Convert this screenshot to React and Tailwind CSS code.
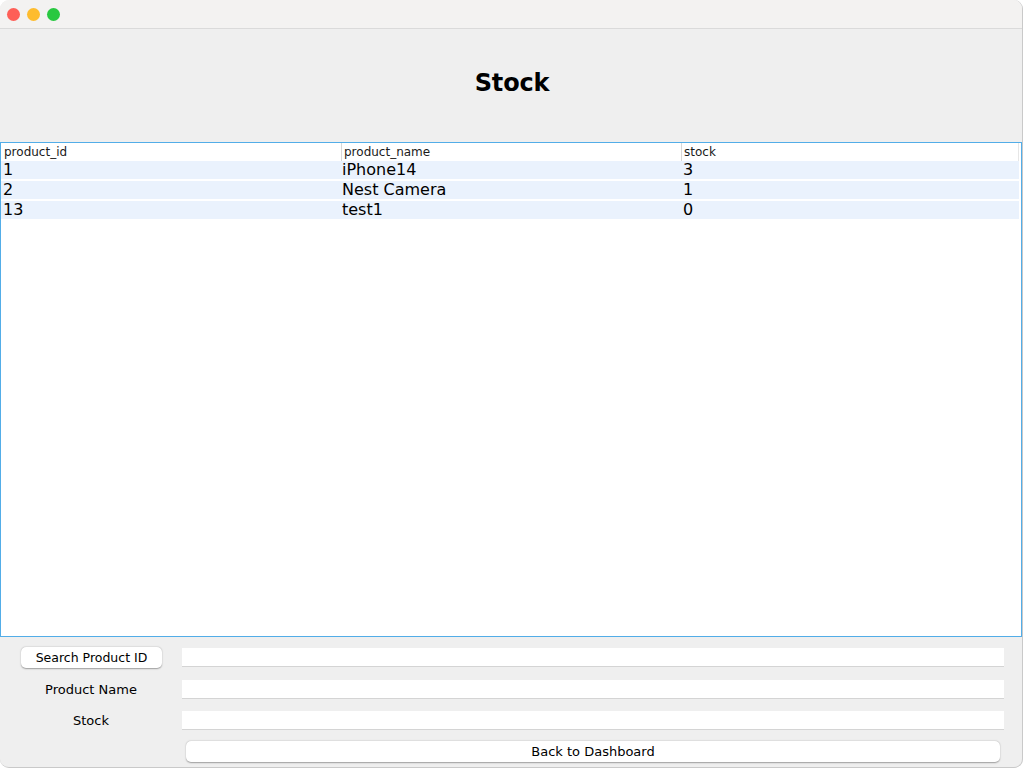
import React from 'react';

const rows = [
    { id: '1', name: 'iPhone14', stock: '3' },
    { id: '2', name: 'Nest Camera', stock: '1' },
    { id: '13', name: 'test1', stock: '0' },
];

const Field = () => (
    <div className="flex-1 h-[19px] bg-white border-b border-[#d4d4d4]" />
);

export default function App() {
    return (
        <div className="w-[1026px] h-[769px] bg-white font-['DejaVu_Sans',sans-serif] text-black">
            <div className="w-[1023px] h-[768px] flex flex-col bg-[#efefef] border-r border-b border-[#c9c9c9] rounded-b-[9px] rounded-t-[9px] overflow-hidden">
                {/* Title bar */}
                <div className="h-[29px] shrink-0 bg-[#f3f2f1] border-b border-[#dadada] flex items-center gap-[7px] pl-[7px]">
                    <span className="w-[13px] h-[13px] rounded-full bg-[#fe5f57]" />
                    <span className="w-[13px] h-[13px] rounded-full bg-[#febc2e]" />
                    <span className="w-[13px] h-[13px] rounded-full bg-[#28c840]" />
                </div>

                {/* Heading */}
                <div className="h-[113px] shrink-0 flex items-center justify-center">
                    <h1 className="text-[24px] font-bold pl-[2px] pb-[5px] tracking-[-0.2px]">Stock</h1>
                </div>

                {/* Table */}
                <div className="h-[495px] shrink-0 bg-white border border-[#52ade8] flex flex-col pr-[2px]">
                    <div className="flex h-[18px] text-[12px] leading-[18px] text-[#1a1a1a] border-r border-[#e6e6e6]">
                        <div className="w-[340px] pl-[3px]">product_id</div>
                        <div className="w-[340px] pl-[2px] border-l border-[#d8d8d8]">product_name</div>
                        <div className="flex-1 pl-[2px] border-l border-[#d8d8d8]">stock</div>
                    </div>
                    {rows.map(r => (
                        <div key={r.id} className="flex h-[20px] text-[16px] leading-[18px] bg-[#eaf2fd] border-b-2 border-white">
                            <div className="w-[340px] pl-[2px]">{r.id}</div>
                            <div className="w-[340px] pl-[1px]">{r.name}</div>
                            <div className="flex-1 pl-[2px]">{r.stock}</div>
                        </div>
                    ))}
                </div>

                {/* Form */}
                <div className="flex-1 flex flex-col pt-[9px] pr-[18px] text-[13px]">
                    <div className="flex items-center h-[22px]">
                        <div className="w-[182px] shrink-0 flex pl-[21px]">
                            <button className="w-[141px] h-[21px] bg-white rounded-[5px] shadow-[0_0.5px_1.5px_rgba(0,0,0,0.35)] text-[12.5px] leading-[21px]">Search Product ID</button>
                        </div>
                        <Field />
                    </div>
                    <div className="flex items-center h-[19px] mt-[12px]">
                        <div className="w-[182px] shrink-0 text-center pt-[1px]">Product Name</div>
                        <Field />
                    </div>
                    <div className="flex items-center h-[19px] mt-[12px]">
                        <div className="w-[182px] shrink-0 text-center pt-[1px]">Stock</div>
                        <Field />
                    </div>
                    <div className="flex mt-[11px] pl-[186px] pr-[4px]">
                        <button className="flex-1 h-[21px] bg-white rounded-[5px] shadow-[0_0.5px_1.5px_rgba(0,0,0,0.35)] text-[13px] leading-[21px]">Back to Dashboard</button>
                    </div>
                </div>
            </div>
        </div>
    );
}
